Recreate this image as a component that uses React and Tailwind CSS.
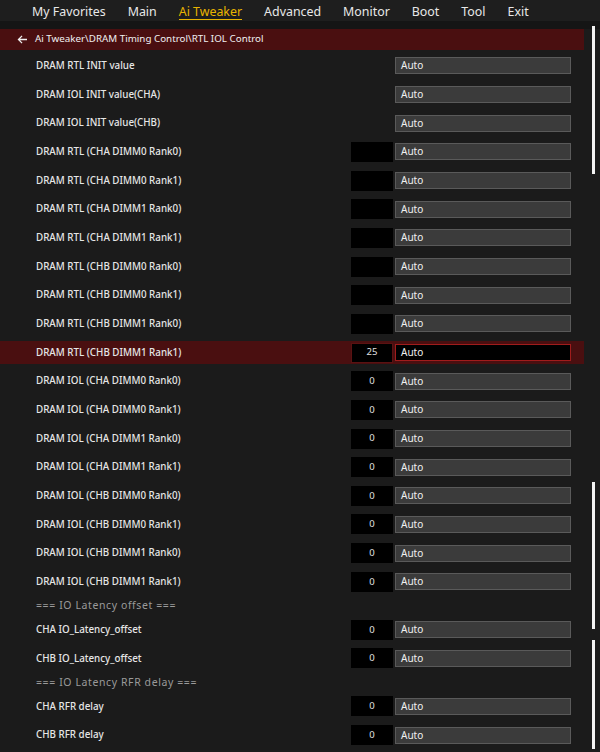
const tabs = ['My Favorites', 'Main', 'Ai Tweaker', 'Advanced', 'Monitor', 'Boot', 'Tool', 'Exit']

const items = [
  { label: 'DRAM RTL INIT value' },
  { label: 'DRAM IOL INIT value(CHA)' },
  { label: 'DRAM IOL INIT value(CHB)' },
  { label: 'DRAM RTL (CHA DIMM0 Rank0)', num: '' },
  { label: 'DRAM RTL (CHA DIMM0 Rank1)', num: '' },
  { label: 'DRAM RTL (CHA DIMM1 Rank0)', num: '' },
  { label: 'DRAM RTL (CHA DIMM1 Rank1)', num: '' },
  { label: 'DRAM RTL (CHB DIMM0 Rank0)', num: '' },
  { label: 'DRAM RTL (CHB DIMM0 Rank1)', num: '' },
  { label: 'DRAM RTL (CHB DIMM1 Rank0)', num: '' },
  { label: 'DRAM RTL (CHB DIMM1 Rank1)', num: '25', active: true },
  { label: 'DRAM IOL (CHA DIMM0 Rank0)', num: '0' },
  { label: 'DRAM IOL (CHA DIMM0 Rank1)', num: '0' },
  { label: 'DRAM IOL (CHA DIMM1 Rank0)', num: '0' },
  { label: 'DRAM IOL (CHA DIMM1 Rank1)', num: '0' },
  { label: 'DRAM IOL (CHB DIMM0 Rank0)', num: '0' },
  { label: 'DRAM IOL (CHB DIMM0 Rank1)', num: '0' },
  { label: 'DRAM IOL (CHB DIMM1 Rank0)', num: '0' },
  { label: 'DRAM IOL (CHB DIMM1 Rank1)', num: '0' },
  { header: '=== IO Latency offset ===' },
  { label: 'CHA IO_Latency_offset', num: '0' },
  { label: 'CHB IO_Latency_offset', num: '0' },
  { header: '=== IO Latency RFR delay ===' },
  { label: 'CHA RFR delay', num: '0' },
  { label: 'CHB RFR delay', num: '0' },
]

const Row = ({ item }) => {
  if (item.header) {
    return (
      <div className="flex h-[19.33px] items-center pl-[36px] text-[10.5px] tracking-[0.6px] text-[#9a9a9a]">
        {item.header}
      </div>
    )
  }
  const active = item.active
  return (
    <div className="flex h-[28.67px] items-center">
      <div
        className={`flex h-[23px] w-[584px] items-center pl-[36px] ${active ? 'bg-[#4a0f10]' : ''}`}
      >
        <div className="min-w-0 flex-1 truncate pt-[1px] text-[9.8px] font-medium text-[#e6e6e6]">{item.label}</div>
        {item.num !== undefined && (
          <div
            className={`flex h-[20px] w-[42px] items-center justify-center bg-black text-[9.5px] text-[#e0e0e0] ${active ? 'border border-[#5a1212]' : ''}`}
          >
            {item.num}
          </div>
        )}
        <div
          className={`ml-[2px] mr-[13px] flex h-[17px] w-[176px] items-center border pl-[5px] text-[10px] text-[#f0f0f0] ${
            active ? 'border-[#a01c1c] bg-black' : 'border-[#5a5a5a] bg-[#3b3b3b]'
          }`}
        >
          Auto
        </div>
      </div>
    </div>
  )
}

export default function App() {
  return (
    <div className="relative h-[752px] w-[600px] overflow-hidden bg-[#1b1b1b] font-['Noto_Sans',sans-serif]">
      <div className="flex h-[21px] items-start gap-[22px] bg-[#1e1e1e] pl-[32px] pt-[4px] text-[12.4px] text-[#e8e8e8]">
        {tabs.map((t) =>
          t === 'Ai Tweaker' ? (
            <span key={t} className="border-b border-[#e8b400] leading-[15px] text-[#e8b400]">
              {t}
            </span>
          ) : (
            <span key={t} className="leading-[15px]">
              {t}
            </span>
          )
        )}
      </div>
      <div className="h-[8px] bg-[#151515]" />
      <div className="flex h-[21px] w-[584px] items-center gap-[7px] bg-[#4a0f10] pl-[17px] text-[9.8px] text-[#f0f0f0]">
        <svg width="11" height="9" viewBox="0 0 12 10" fill="none" stroke="#f0f0f0" strokeWidth="1.4">
          <path d="M11 5H1.5M5.5 1L1.5 5l4 4" />
        </svg>
        <span>Ai Tweaker\DRAM Timing Control\RTL IOL Control</span>
      </div>
      <div className="pt-[1.67px]">
        {items.map((it, i) => (
          <Row key={i} item={it} />
        ))}
      </div>
      <div className="absolute left-[592px] top-[26px] h-[148px] w-[3px] bg-[#f2f2f2]" />
      <div className="absolute left-[592px] top-[482px] h-[147px] w-[3px] bg-[#f2f2f2]" />
      <div className="absolute left-[592px] top-[640px] h-[109px] w-[3px] bg-[#f2f2f2]" />
    </div>
  )
}
